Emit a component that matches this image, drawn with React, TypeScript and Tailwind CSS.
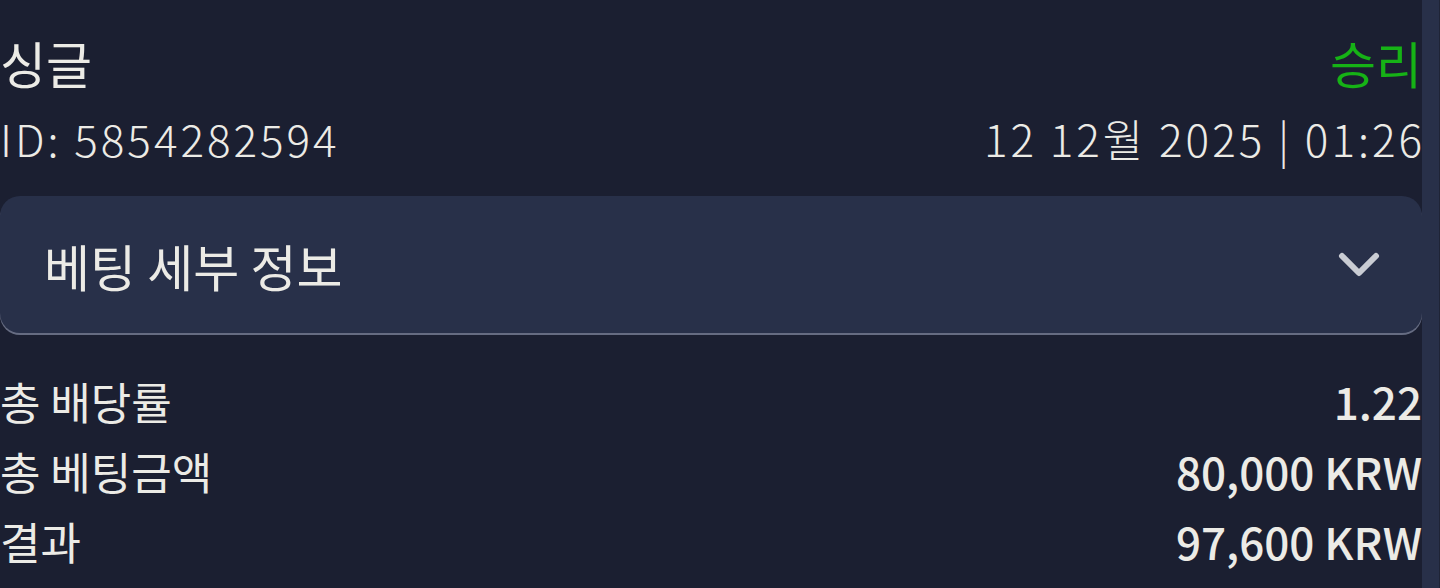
import React from "react";

const font = { fontFamily: '"Noto Sans CJK KR", "Noto Sans", sans-serif' };

export default function App() {
  return (
    <div
      className="flex h-[588px] w-[1440px] overflow-hidden bg-[#1b1f31] text-[#ecebe6]"
      style={font}
    >
      <div className="flex flex-1 flex-col pt-[30px]">
        <div className="flex h-[64px] items-center justify-between text-[50px] leading-none">
          <span>싱글</span>
          <span className="text-[#16b216]">승리</span>
        </div>
        <div className="mt-[14px] flex h-[60px] items-center justify-between text-[44px] leading-none font-light tracking-[3px]">
          <span>ID: 5854282594</span>
          <span className="-mr-[3px]">12 12월 2025 | 01:26</span>
        </div>
        <button className="mt-[28px] flex h-[137px] w-full items-center justify-between rounded-[20px] bg-[#283049] pl-[44px] pr-[42px] shadow-[0_2px_0_#666c82]">
          <span className="text-[50px] leading-none text-[#ecebe6]">베팅 세부 정보</span>
          <svg width="42" height="28" viewBox="0 0 42 28" fill="none">
            <path
              d="M4 5 L21 22 L38 5"
              stroke="#c9ccd3"
              strokeWidth="6"
              strokeLinecap="round"
              strokeLinejoin="round"
            />
          </svg>
        </button>
        <div className="mt-[33px] flex flex-col text-[44px] leading-none">
          <div className="flex h-[70px] items-center justify-between">
            <span>총 배당률</span>
            <span className="font-medium">1.22</span>
          </div>
          <div className="flex h-[70px] items-center justify-between">
            <span>총 베팅금액</span>
            <span className="font-medium">80,000 KRW</span>
          </div>
          <div className="flex h-[70px] items-center justify-between">
            <span>결과</span>
            <span className="font-medium">97,600 KRW</span>
          </div>
        </div>
      </div>
      <div className="flex h-full w-[18px] bg-[#283049]">
        <div className="flex-1" />
        <div className="w-px bg-[#1f2436]" />
      </div>
    </div>
  );
}
